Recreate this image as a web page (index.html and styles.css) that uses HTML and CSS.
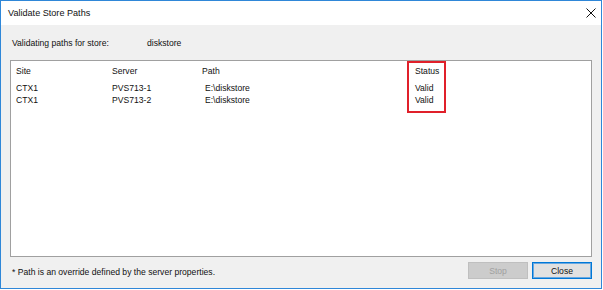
FILE: index.html
```html
<!DOCTYPE html>
<html lang="en">
<head>
  <meta charset="UTF-8" />
  <title>Validate Store Paths</title>
  <link rel="stylesheet" href="styles.css">
</head>
<body>
  <div class="window">
    <div class="titlebar">
      <span class="title">Validate Store Paths</span>
      <svg class="close-x" width="10" height="10" viewBox="0 0 10 10">
        <path d="M0.5 0.5 L9.5 9.5 M9.5 0.5 L0.5 9.5" stroke="#111" stroke-width="1" fill="none" />
      </svg>
    </div>

    <div class="content">
      <div class="store-row">
        <span class="store-label">Validating paths for store:</span>
        <span class="store-name">diskstore</span>
      </div>

      <div class="list">
        <div class="list-row list-head">
          <span>Site</span>
          <span>Server</span>
          <span>Path</span>
          <span>Status</span>
        </div>
        <div class="list-row">
          <span>CTX1</span>
          <span>PVS713-1</span>
          <span class="path">E:\diskstore</span>
          <span>Valid</span>
        </div>
        <div class="list-row">
          <span>CTX1</span>
          <span>PVS713-2</span>
          <span class="path">E:\diskstore</span>
          <span>Valid</span>
        </div>
        <div class="highlight"></div>
      </div>

      <div class="footer">
        <span class="note">* Path is an override defined by the server properties.</span>
        <div class="buttons">
          <button class="btn" disabled>Stop</button>
          <button class="btn btn-default">Close</button>
        </div>
      </div>
    </div>
  </div>
</body>
</html>
```

FILE: styles.css
```css
body {
  margin: 0;
  background-color: #ffffff;
  font-family: "Liberation Sans", Arial, sans-serif;
  font-size: 8.6px;
  color: #111;
}
.window {
  width: 602px;
  height: 289px;
  box-sizing: border-box;
  border: 1px solid #2f87d8;
  background-color: #f0f0f0;
  display: flex;
  flex-direction: column;
}
.titlebar {
  height: 24px;
  background-color: #fff;
  display: flex;
  align-items: center;
  justify-content: space-between;
  padding: 0 5px 0 7px;
}
.title {
  font-size: 9.1px;
  line-height: 24px;
}
.close-x {
  margin-bottom: 1px;
}
.content {
  flex: 1;
  padding: 0 9px;
  display: flex;
  flex-direction: column;
}
.store-row {
  display: flex;
  padding: 12px 0 0 2px;
  line-height: 12px;
  height: 23px;
}
.store-label {
  width: 135px;
}
.list {
  position: relative;
  height: 197px;
  box-sizing: border-box;
  border: 1px solid #a0a0a0;
  background-color: #fff;
}
.list-row {
  display: grid;
  grid-template-columns: 96px 90px 213px 1fr;
  line-height: 12px;
}
.list-row span {
  padding-left: 5px;
}
.list-row .path {
  padding-left: 8px;
}
.list-head {
  line-height: 21px;
}
.highlight {
  position: absolute;
  left: 396px;
  top: 0;
  width: 39px;
  height: 52px;
  border: 2px solid #e0202a;
  box-sizing: border-box;
}
.footer {
  display: flex;
  justify-content: space-between;
  align-items: center;
  margin-top: 5px;
  height: 17px;
}
.note {
  padding-left: 2px;
  margin-top: 2px;
}
.buttons {
  display: flex;
  gap: 4px;
}
.btn {
  width: 60px;
  height: 17px;
  box-sizing: border-box;
  font-family: "Liberation Sans", Arial, sans-serif;
  font-size: 8.6px;
  padding: 0;
  border: 1px solid #adadad;
  background-color: #e1e1e1;
  color: #111;
}
.btn:disabled {
  background-color: #cccccc;
  border-color: #bfbfbf;
  color: #a0a0a0;
}
.btn-default {
  border-color: #0078d7;
  box-shadow: inset 0 0 0 1px #6aa8e0;
}
```
